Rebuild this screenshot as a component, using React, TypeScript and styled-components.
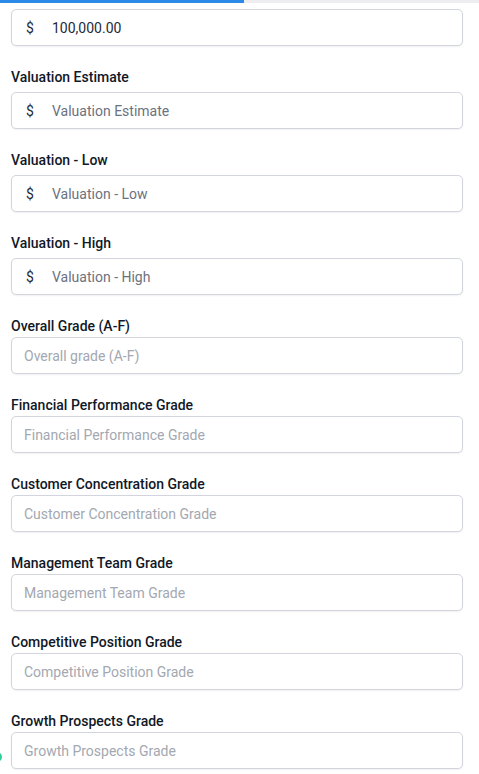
import React from "react";
import styled, { createGlobalStyle } from "styled-components";

const Global = createGlobalStyle`
  html, body { margin: 0; padding: 0; background: #ffffff; }
  body { font-family: Roboto, "Noto Sans", Arial, sans-serif; -webkit-font-smoothing: antialiased; }
  * { box-sizing: border-box; }
`;

const Page = styled.div`
  position: relative;
  width: 479px;
  height: 774px;
  overflow: hidden;
  background: #fff;
`;

const Progress = styled.div`
  height: 3px;
  background: #eeeef0;
  margin-bottom: 6px;
`;

const ProgressFill = styled.div`
  height: 100%;
  background: #2b8ae8;
`;

const Form = styled.div`
  display: flex;
  flex-direction: column;
  gap: 21px;
  padding: 0 16px 0 11px;
`;

const Field = styled.div`
  display: flex;
  flex-direction: column;
`;

const Label = styled.label<{ $gap: number }>`
  font-size: 14px;
  line-height: 20px;
  font-weight: 500;
  color: #111827;
  margin-bottom: ${(p) => p.$gap}px;
`;

const InputBox = styled.div`
  display: flex;
  align-items: center;
  height: 37px;
  border: 1px solid #d3d5de;
  border-radius: 5px;
  background: #fff;
  box-shadow: 0 1px 2px rgba(16, 24, 40, 0.06);
`;

const Prefix = styled.span`
  width: 40px;
  padding-left: 14px;
  font-size: 14px;
  color: #1f2937;
  flex-shrink: 0;
`;

const Input = styled.input<{ $prefixed: boolean; $muted: boolean }>`
  flex: 1;
  min-width: 0;
  border: none;
  outline: none;
  background: transparent;
  font-family: Roboto, "Noto Sans", Arial, sans-serif;
  font-size: 14px;
  color: #1f2937;
  padding: 0 12px 0 ${(p) => (p.$prefixed ? 0 : 12)}px;
  &::placeholder {
    color: ${(p) => (p.$muted ? "#6b7280" : "#a3a8b1")};
  }
`;

const Bubble = styled.div`
  position: absolute;
  left: -8px;
  top: 752px;
  width: 10px;
  height: 10px;
  border-radius: 50%;
  background: #2fcf9a;
`;

type FieldDef = {
  label?: string;
  placeholder: string;
  value?: string;
  money?: boolean;
};

const fields: FieldDef[] = [
  { placeholder: "", value: "100,000.00", money: true },
  { label: "Valuation Estimate", placeholder: "Valuation Estimate", money: true },
  { label: "Valuation - Low", placeholder: "Valuation - Low", money: true },
  { label: "Valuation - High", placeholder: "Valuation - High", money: true },
  { label: "Overall Grade (A-F)", placeholder: "Overall grade (A-F)" },
  { label: "Financial Performance Grade", placeholder: "Financial Performance Grade" },
  { label: "Customer Concentration Grade", placeholder: "Customer Concentration Grade" },
  { label: "Management Team Grade", placeholder: "Management Team Grade" },
  { label: "Competitive Position Grade", placeholder: "Competitive Position Grade" },
  { label: "Growth Prospects Grade", placeholder: "Growth Prospects Grade" },
];

export default function App() {
  return (
    <Page>
      <Global />
      <Progress>
        <ProgressFill style={{ width: "51%" }} />
      </Progress>
      <Form>
        {fields.map((f, i) => (
          <Field key={i}>
            {f.label && <Label $gap={f.money ? 5 : 1}>{f.label}</Label>}
            <InputBox>
              {f.money && <Prefix>$</Prefix>}
              <Input
                $prefixed={!!f.money}
                $muted={!!f.money}
                placeholder={f.placeholder}
                defaultValue={f.value}
              />
            </InputBox>
          </Field>
        ))}
      </Form>
      <Bubble />
    </Page>
  );
}
